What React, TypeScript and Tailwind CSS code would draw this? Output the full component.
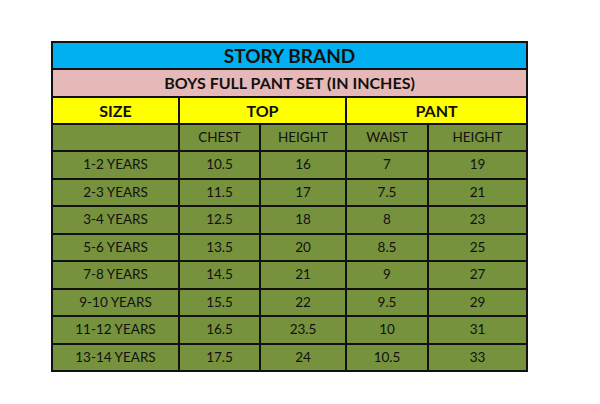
import React from "react";

const rows = [
  ["1-2 YEARS", "10.5", "16", "7", "19"],
  ["2-3 YEARS", "11.5", "17", "7.5", "21"],
  ["3-4 YEARS", "12.5", "18", "8", "23"],
  ["5-6 YEARS", "13.5", "20", "8.5", "25"],
  ["7-8 YEARS", "14.5", "21", "9", "27"],
  ["9-10 YEARS", "15.5", "22", "9.5", "29"],
  ["11-12 YEARS", "16.5", "23.5", "10", "31"],
  ["13-14 YEARS", "17.5", "24", "10.5", "33"],
];

const cell = "border-2 border-[#111] text-center p-0 align-middle leading-none";

export default function App() {
  return (
    <div className="w-[600px] h-[404px] bg-white pt-[41px] pl-[51px]" style={{ fontFamily: "Lato, 'Open Sans', sans-serif" }}>
      <table className="table-fixed border-collapse w-[475px] text-[#111]">
        <colgroup>
          <col className="w-[127px]" />
          <col className="w-[81px]" />
          <col className="w-[86px]" />
          <col className="w-[82px]" />
          <col className="w-[99px]" />
        </colgroup>
        <tbody>
          <tr className="h-[27px] bg-[#00b0f0]">
            <td colSpan={5} className={`${cell} font-bold text-[19px]`}>STORY BRAND</td>
          </tr>
          <tr className="h-[28px] bg-[#e6b9b8]">
            <td colSpan={5} className={`${cell} font-bold text-[16px]`}>BOYS FULL PANT SET (IN INCHES)</td>
          </tr>
          <tr className="h-[27px] bg-[#ffff00]">
            <td className={`${cell} font-bold text-[16px]`}>SIZE</td>
            <td colSpan={2} className={`${cell} font-bold text-[16px]`}>TOP</td>
            <td colSpan={2} className={`${cell} font-bold text-[16px]`}>PANT</td>
          </tr>
          <tr className="h-[27px] bg-[#76923c] text-[13.5px]">
            <td className={cell}></td>
            <td className={cell}>CHEST</td>
            <td className={cell}>HEIGHT</td>
            <td className={cell}>WAIST</td>
            <td className={cell}>HEIGHT</td>
          </tr>
          {rows.map((r, i) => (
            <tr key={i} className={`${i % 2 === 0 ? "h-[28px]" : "h-[27px]"} bg-[#76923c] text-[13.5px]`}>
              {r.map((c, j) => (
                <td key={j} className={cell}>{c}</td>
              ))}
            </tr>
          ))}
        </tbody>
      </table>
    </div>
  );
}
